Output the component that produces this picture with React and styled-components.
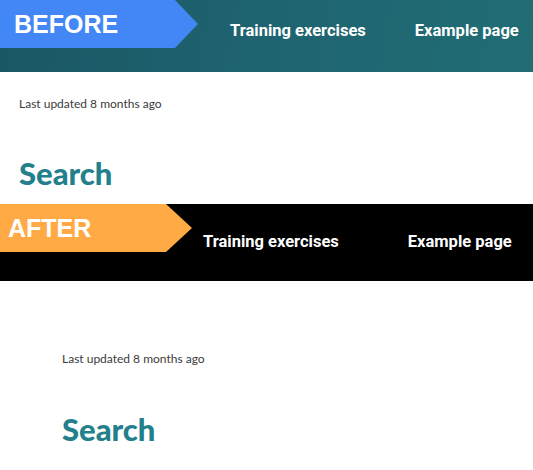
import React from 'react'
import styled, { createGlobalStyle } from 'styled-components'

const Global = createGlobalStyle`
    body {
        margin: 0;
        background: #ffffff;
        font-family: Lato, "Liberation Sans", sans-serif;
    }
`

const Section = styled.section`
    display: flex;
    flex-direction: column;
    padding-bottom: ${p => p.$bottom}px;
`

const Banner = styled.header`
    display: flex;
    align-items: flex-start;
    height: ${p => p.$height}px;
    background: ${p => p.$bg};
`

const Tag = styled.div`
    flex: none;
    width: ${p => p.$width + p.$point}px;
    height: 48px;
    box-sizing: border-box;
    padding-left: ${p => p.$pad}px;
    background: ${p => p.$color};
    clip-path: polygon(0 0, ${p => p.$width}px 0, 100% 50%, ${p => p.$width}px 100%, 0 100%);
    color: #ffffff;
    font-family: "Liberation Sans", Arial, sans-serif;
    font-weight: 700;
    font-size: 25px;
    line-height: 48px;
`

const Nav = styled.nav`
    display: flex;
    gap: ${p => p.$gap}px;
    margin-left: ${p => p.$left}px;
    padding-top: ${p => p.$top}px;
`

const NavLink = styled.a`
    color: #ffffff;
    font-family: Roboto, sans-serif;
    font-weight: 700;
    font-size: 16.5px;
    line-height: 20px;
    text-decoration: none;
    white-space: nowrap;
`

const Content = styled.main`
    display: flex;
    flex-direction: column;
    padding: ${p => p.$top}px 0 0 ${p => p.$left}px;
`

const Updated = styled.p`
    margin: 0;
    color: #3a3a3a;
    font-family: Lato, sans-serif;
    font-size: 12px;
    line-height: 16px;
`

const Title = styled.h1`
    margin: ${p => p.$gap}px 0 0;
    color: #237f8c;
    font-family: Lato, sans-serif;
    font-weight: 900;
    font-size: 31px;
    line-height: 36px;
`

function Page({ tag, tagColor, tagWidth, tagPoint, tagPad, bannerBg, bannerHeight, navLeft, navGap, navTop, contentTop, contentLeft, titleGap, bottom }) {
    return (
        <Section $bottom={bottom}>
            <Banner $bg={bannerBg} $height={bannerHeight}>
                <Tag $color={tagColor} $width={tagWidth} $point={tagPoint} $pad={tagPad}>{tag}</Tag>
                <Nav $left={navLeft} $gap={navGap} $top={navTop}>
                    <NavLink href="#">Training exercises</NavLink>
                    <NavLink href="#">Example page</NavLink>
                </Nav>
            </Banner>
            <Content $top={contentTop} $left={contentLeft}>
                <Updated>Last updated 8 months ago</Updated>
                <Title $gap={titleGap}>Search</Title>
            </Content>
        </Section>
    )
}

export default function App() {
    return (
        <>
            <Global />
            <Page
                tag="BEFORE"
                tagColor="#4287f5"
                tagWidth={175}
                tagPoint={23}
                tagPad={14}
                bannerBg="linear-gradient(100deg, #1b5664 0%, #1e6470 50%, #216d75 100%)"
                bannerHeight={72}
                navLeft={32}
                navGap={49}
                navTop={21}
                contentTop={24}
                contentLeft={19}
                titleGap={43}
                bottom={13}
            />
            <Page
                tag="AFTER"
                tagColor="#ffaa44"
                tagWidth={166}
                tagPoint={26}
                tagPad={8}
                bannerBg="#000000"
                bannerHeight={77}
                navLeft={11}
                navGap={69}
                navTop={28}
                contentTop={70}
                contentLeft={62}
                titleGap={44}
                bottom={0}
            />
        </>
    )
}
